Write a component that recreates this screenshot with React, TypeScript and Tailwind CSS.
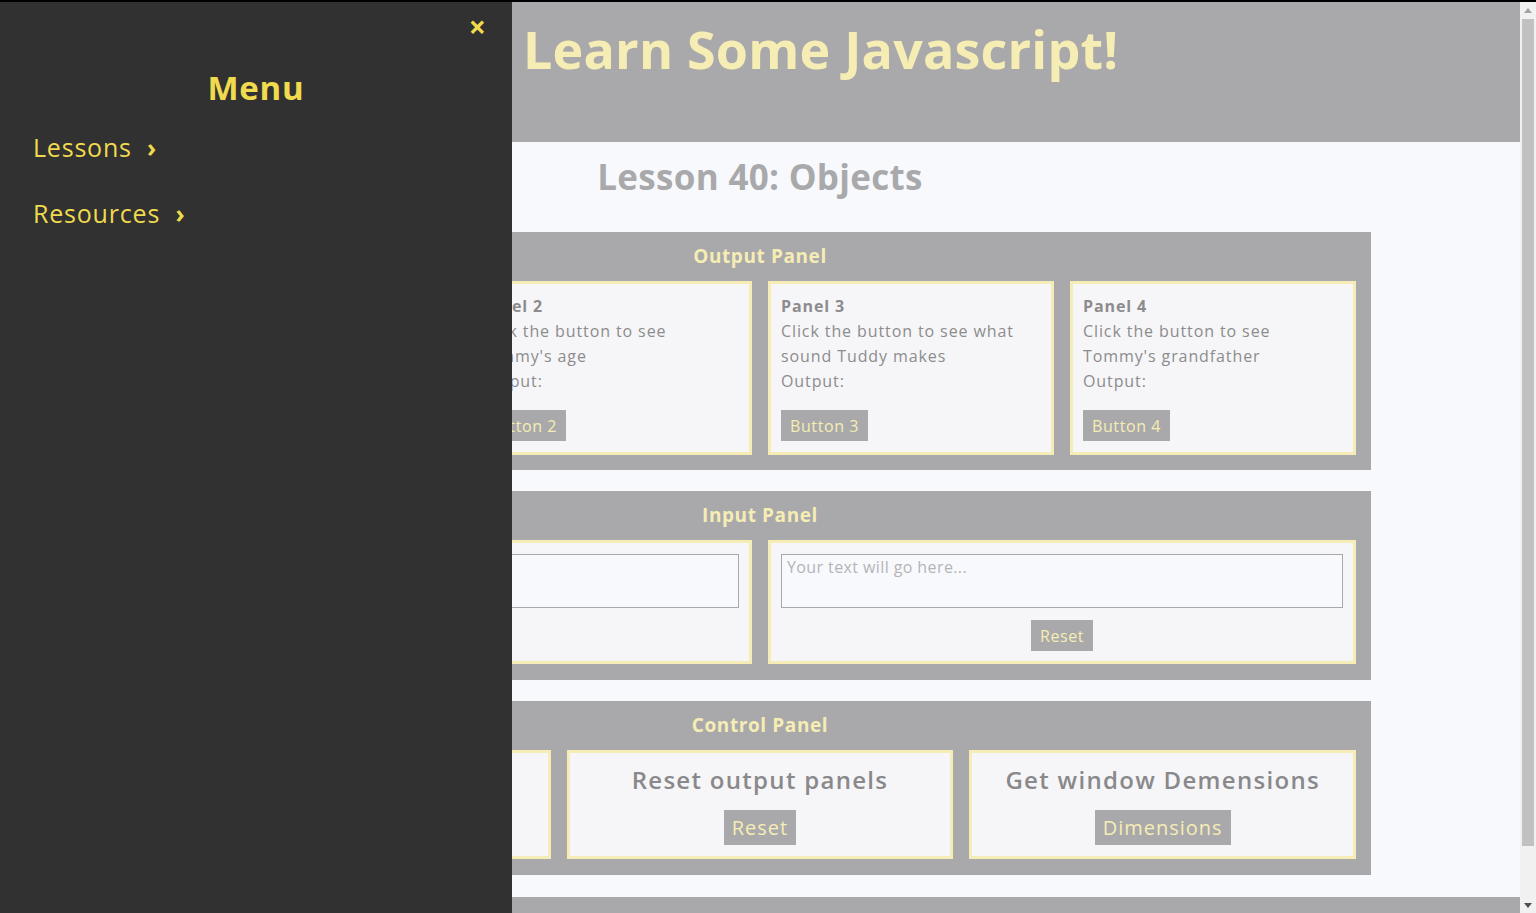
const outputPanels = [
  { title: "Panel 1", text: "Click the button to see Tommy's name", label: "Button 1" },
  { title: "Panel 2", text: "Click the button to see Tommy's age", label: "Button 2" },
  { title: "Panel 3", text: "Click the button to see what sound Tuddy makes", label: "Button 3" },
  { title: "Panel 4", text: "Click the button to see Tommy's grandfather", label: "Button 4" },
];

const controls = [
  { title: "Change the theme", label: "Theme" },
  { title: "Reset output panels", label: "Reset" },
  { title: "Get window Demensions", label: "Dimensions" },
];

const font = { fontFamily: '"Open Sans", "DejaVu Sans", sans-serif' };

function Section({ title, tight, children }: { title: string; tight?: boolean; children: React.ReactNode }) {
  return (
    <section className={tight ? "bg-[#a9a9ab] px-[15px] pt-[12px] pb-[15px]" : "bg-[#a9a9ab] px-[15px] pt-[12px] pb-[16px]"}>
      <h3 className="h-[24px] leading-[24px] mb-[13px] text-center text-[19px] tracking-[0.6px] font-bold text-[#f6edb4]">
        {title}
      </h3>
      {children}
    </section>
  );
}

function Scrollbar() {
  return (
    <div className="w-[16px] shrink-0 bg-[#f1f1f1] flex flex-col items-center">
      <div className="h-[16px] flex items-center justify-center">
        <svg width="8" height="5" viewBox="0 0 8 5">
          <path d="M0 5 L4 0 L8 5 Z" fill="#a3a3a3" />
        </svg>
      </div>
      <div className="w-[12px] h-[827px] mt-[1px] bg-[#c1c1c1]" />
      <div className="flex-1" />
      <div className="h-[16px] flex items-center justify-center">
        <svg width="8" height="5" viewBox="0 0 8 5">
          <path d="M0 0 L8 0 L4 5 Z" fill="#505050" />
        </svg>
      </div>
    </div>
  );
}

export default function App() {
  return (
    <div className="relative h-screen border-t-2 border-black overflow-hidden flex" style={font}>
      <div className="flex-1 min-w-0 h-full overflow-hidden bg-[#f8f9fd]">
        <header className="h-[140px] bg-[#a9a9ab] pl-[523px] pt-[12px]">
          <h1 className="text-[52px] leading-[70px] font-bold text-[#f6edb4] tracking-[0.2px]">
            Learn Some Javascript!
          </h1>
        </header>

        <main className="w-[1222px] mx-auto pt-[15px] pb-[22px]">
          <h2 className="text-center text-[35px] leading-[40px] font-bold tracking-[0.3px] text-[#a9a9ab] mb-[35px]">
            Lesson 40: Objects
          </h2>

          <div className="flex flex-col gap-[21px]">
            <Section title="Output Panel" tight>
              <div className="grid grid-cols-4 gap-[16px]">
                {outputPanels.map((p) => (
                  <div
                    key={p.title}
                    className="h-[174px] border-[3px] border-[#f6ecb6] bg-[#f6f6f8] px-[10px] pt-[10px] flex flex-col items-start"
                  >
                    <div className="text-[16px] leading-[25px] tracking-[0.9px] text-[#8c8c8e]">
                      <p className="font-bold">{p.title}</p>
                      <p>{p.text}</p>
                      <p>Output:</p>
                    </div>
                    <button className="mt-auto mb-[11px] h-[31px] px-[9px] bg-[#a9a9ab] text-[16px] tracking-[0.6px] text-[#f6edb4]">
                      {p.label}
                    </button>
                  </div>
                ))}
              </div>
            </Section>

            <Section title="Input Panel">
              <div className="grid grid-cols-2 gap-[16px]">
                {["Type something here...", "Your text will go here..."].map((ph, i) => (
                  <div
                    key={ph}
                    className="h-[124px] border-[3px] border-[#f6ecb6] bg-[#f6f6f8] px-[10px] pt-[11px] flex flex-col items-center"
                  >
                    <textarea
                      placeholder={ph}
                      className="w-full h-[54px] resize-none border border-[#a9a9ab] bg-[#f8f9fd] px-[5px] py-[1px] text-[16px] leading-[22px] tracking-[0.4px] text-[#8c8c8e] placeholder:text-[#b4b4b6] outline-none"
                    />
                    <button className="mt-[12px] h-[31px] px-[9px] bg-[#a9a9ab] text-[16px] tracking-[0.6px] text-[#f6edb4]">
                      {i === 0 ? "Submit" : "Reset"}
                    </button>
                  </div>
                ))}
              </div>
            </Section>

            <Section title="Control Panel">
              <div className="grid grid-cols-3 gap-[16px]">
                {controls.map((c) => (
                  <div
                    key={c.title}
                    className="h-[109px] border-[3px] border-[#f6ecb6] bg-[#f6f6f8] pt-[12px] flex flex-col items-center"
                  >
                    <p className="text-[24px] leading-[30px] font-semibold tracking-[1.3px] text-[#89898b]">{c.title}</p>
                    <button className="mt-[15px] h-[35px] px-[8px] bg-[#a9a9ab] text-[20px] tracking-[1px] text-[#f6edb4]">
                      {c.label}
                    </button>
                  </div>
                ))}
              </div>
            </Section>
          </div>
        </main>

        <footer className="h-[76px] bg-[#a9a9ab]" />
      </div>

      <Scrollbar />

      {/* slide-out menu */}
      <nav className="absolute top-0 left-0 bottom-0 w-[512px] bg-[#313131] text-[#f0da4e]">
        <button className="absolute top-[10px] right-[26px] text-[30px] leading-[30px] font-bold">×</button>
        <h2 className="pt-[66px] text-center text-[33px] leading-[40px] font-bold tracking-[0.8px]">Menu</h2>
        <ul className="mt-[24px] pl-[33px] flex flex-col gap-[36px] text-[25px] leading-[30px] font-medium tracking-[0.8px]">
          <li>
            Lessons <span className="ml-[8px] font-bold">›</span>
          </li>
          <li>
            Resources <span className="ml-[8px] font-bold">›</span>
          </li>
        </ul>
      </nav>
    </div>
  );
}
